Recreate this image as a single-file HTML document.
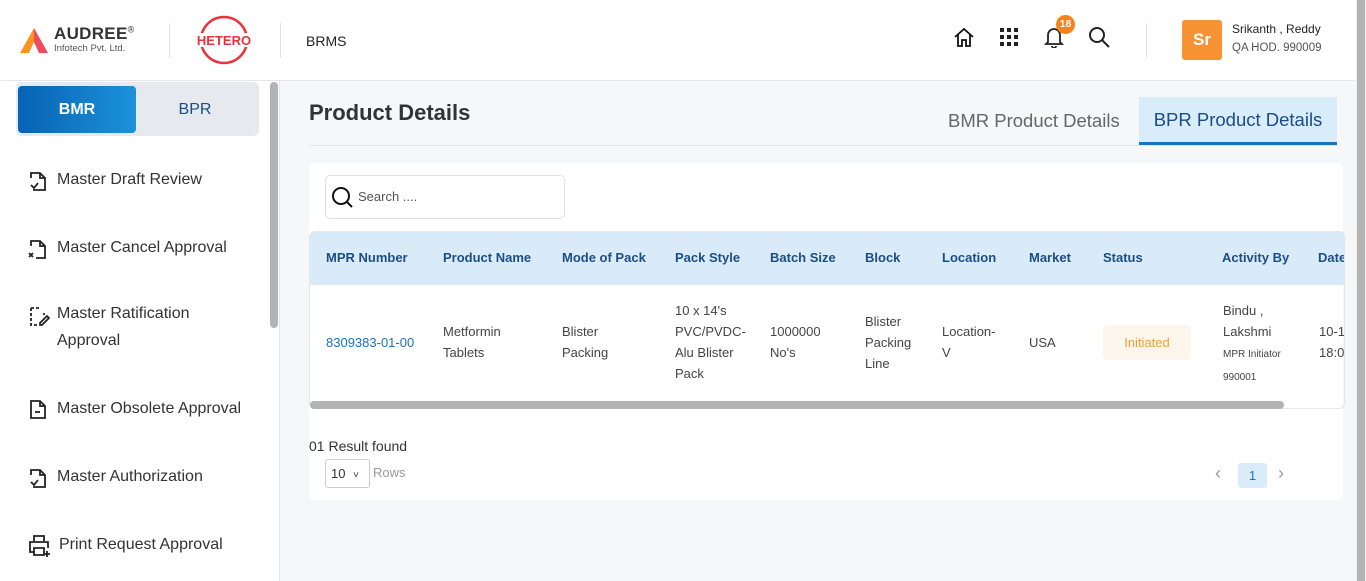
<!DOCTYPE html>
<html><head><meta charset="utf-8"><style>
*{box-sizing:border-box;margin:0;padding:0}
body{width:1366px;height:581px;overflow:hidden;font-family:"Liberation Sans",sans-serif;background:#f6f7f9;position:relative;color:#333}
.abs{position:absolute}
.hdr{left:0;top:0;width:1356px;height:81px;background:#fff;border-bottom:1px solid #e3e6ea}
.side{left:0;top:81px;width:280px;height:500px;background:#fff;border-right:1px solid #e3e6ea}
.mi{position:absolute;left:57px;font-size:16px;color:#333;line-height:27px}
.ic{position:absolute;left:28px}
.th{position:absolute;top:250px;font-size:13px;font-weight:bold;color:#1c4e86}
.td{position:absolute;font-size:13px;color:#444;line-height:21px}
</style></head><body>
<div class="abs hdr"></div>
<svg class="abs" style="left:20px;top:28px" width="28" height="25" viewBox="0 0 28 25"><polygon points="14,0 0,25 9,25 14,14" fill="#f7931e"/><polygon points="14,0 28,25 19,25 14,14" fill="#ef4b5a"/><circle cx="14" cy="21" r="2" fill="#fff"/></svg>
<div class="abs" style="left:54px;top:24px;font-size:17px;font-weight:bold;color:#333;letter-spacing:.3px">AUDREE<sup style="font-size:9px;font-weight:normal">®</sup></div>
<div class="abs" style="left:54px;top:43px;font-size:9.5px;color:#555">Infotech Pvt. Ltd.</div>
<div class="abs" style="left:169px;top:23px;width:1px;height:35px;background:#e3e3e3"></div>
<svg class="abs" style="left:194px;top:14px" width="62" height="52" viewBox="0 0 62 52"><circle cx="30" cy="26" r="23" fill="none" stroke="#e8323c" stroke-width="2.5"/><rect x="0" y="19" width="62" height="14" fill="#fff"/><text x="30" y="31" text-anchor="middle" font-family="Liberation Sans" font-weight="bold" font-size="13" fill="#e8323c">HETERO</text></svg>
<div class="abs" style="left:280px;top:23px;width:1px;height:35px;background:#e3e3e3"></div>
<div class="abs" style="left:306px;top:33px;font-size:14px;color:#222">BRMS</div>
<svg class="abs" style="left:953px;top:27px" width="22" height="20" viewBox="0 0 22 20" fill="none" stroke="#111" stroke-width="1.8"><path d="M2 10 L11 2 L20 10"/><path d="M5 8 V19 H9 V13 H13 V19 H17 V8"/></svg>
<svg class="abs" style="left:1000px;top:28px" width="18" height="18" viewBox="0 0 18 18" fill="#222"><rect x="0" y="0" width="4" height="4"/><rect x="7" y="0" width="4" height="4"/><rect x="14" y="0" width="4" height="4"/><rect x="0" y="7" width="4" height="4"/><rect x="7" y="7" width="4" height="4"/><rect x="14" y="7" width="4" height="4"/><rect x="0" y="14" width="4" height="4"/><rect x="7" y="14" width="4" height="4"/><rect x="14" y="14" width="4" height="4"/></svg>
<svg class="abs" style="left:1044px;top:26px" width="20" height="22" viewBox="0 0 20 22" fill="none" stroke="#222" stroke-width="1.8"><path d="M4 16 V9 a6 6 0 0 1 12 0 V16 L18 18 H2 Z"/><path d="M8 20 a2 2 0 0 0 4 0"/></svg>
<div class="abs" style="left:1056px;top:15px;width:19px;height:19px;border-radius:50%;background:#f7821b;color:#fff;font-size:10.5px;font-weight:bold;text-align:center;line-height:19px">18</div>
<svg class="abs" style="left:1088px;top:26px" width="24" height="24" viewBox="0 0 24 24" fill="none" stroke="#222" stroke-width="2"><circle cx="9" cy="9" r="7"/><path d="M14 14 L21 21"/></svg>
<div class="abs" style="left:1146px;top:23px;width:1px;height:35px;background:#e3e3e3"></div>
<div class="abs" style="left:1182px;top:20px;width:40px;height:40px;border-radius:3px;background:#f79332;color:#fff;font-size:17px;font-weight:bold;text-align:center;line-height:40px">Sr</div>
<div class="abs" style="left:1232px;top:22px;font-size:12px;color:#222">Srikanth , Reddy</div>
<div class="abs" style="left:1232px;top:42px;font-size:11.5px;color:#555">QA HOD. 990009</div>
<div class="abs" style="left:1356px;top:0;width:10px;height:581px;background:#f1f1f1"></div>
<div class="abs" style="left:1357px;top:0;width:8px;height:581px;background:#b3b3b3"></div>
<div class="abs side"></div>
<div class="abs" style="left:270px;top:82px;width:8px;height:246px;border-radius:4px;background:#b3b3b3"></div>
<div class="abs" style="left:16px;top:82px;width:243px;height:54px;border-radius:6px;background:#e6e9ee"></div>
<div class="abs" style="left:18px;top:86px;width:118px;height:47px;border-radius:4px;background:linear-gradient(90deg,#0762b4,#1c92db);color:#fff;font-size:16px;font-weight:bold;text-align:center;line-height:47px">BMR</div>
<div class="abs" style="left:136px;top:86px;width:118px;height:47px;color:#1a4d88;font-size:16px;text-align:center;line-height:47px">BPR</div>
<svg class="ic" style="top:170px" width="20" height="22" viewBox="0 0 20 22" fill="none" stroke="#222" stroke-width="1.8"><path d="M3 8 V3 H12 L17 8 V20 H5"/><path d="M12 3 V8 H17"/><path d="M3 15 L6 18 L10 13"/></svg>
<div class="mi" style="top:166px">Master Draft Review</div>
<svg class="ic" style="top:238px" width="20" height="22" viewBox="0 0 20 22" fill="none" stroke="#222" stroke-width="1.8"><path d="M3 8 V3 H12 L17 8 V20 H8"/><path d="M12 3 V8 H17"/><path d="M1 15 L5 19 M5 15 L1 19"/></svg>
<div class="mi" style="top:234px">Master Cancel Approval</div>
<svg class="ic" style="top:305px" width="22" height="22" viewBox="0 0 22 22" fill="none" stroke="#222" stroke-width="1.8" stroke-dasharray="3 2"><path d="M3 3 H11 M16 8 V10 M3 3 V20 H11"/><path d="M12 18 L19 11 L21 13 L14 20 H12 Z" stroke-dasharray="none"/></svg>
<div class="mi" style="top:300px">Master Ratification<br>Approval</div>
<svg class="ic" style="top:398px" width="20" height="22" viewBox="0 0 20 22" fill="none" stroke="#222" stroke-width="1.8"><path d="M3 3 H12 L17 8 V20 H3 Z"/><path d="M12 3 V8 H17"/><path d="M7 14 H12"/></svg>
<div class="mi" style="top:395px">Master Obsolete Approval</div>
<svg class="ic" style="top:467px" width="20" height="22" viewBox="0 0 20 22" fill="none" stroke="#222" stroke-width="1.8"><path d="M3 8 V3 H12 L17 8 V20 H5"/><path d="M12 3 V8 H17"/><path d="M3 15 L6 18 L10 13"/></svg>
<div class="mi" style="top:463px">Master Authorization</div>
<svg class="ic" style="top:534px" width="24" height="24" viewBox="0 0 24 24" fill="none" stroke="#222" stroke-width="1.8"><path d="M6 7 V2 H16 V7"/><path d="M6 18 H2 V8 H20 V14"/><path d="M6 14 H16 V21 H6 Z"/><path d="M19 17 V23 M16 20 H22"/></svg>
<div class="mi" style="top:531px;left:59px">Print Request Approval</div>
<div class="abs" style="left:309px;top:100px;font-size:22px;font-weight:bold;color:#333">Product Details</div>
<div class="abs" style="left:309px;top:145px;width:1028px;height:1px;background:#e2e4e8"></div>
<div class="abs" style="left:948px;top:110px;font-size:18.5px;color:#666">BMR Product Details</div>
<div class="abs" style="left:1139px;top:97px;width:198px;height:48px;background:#d9ecf9;border-bottom:3px solid #1a73c0;color:#1a4d88;font-size:18.5px;text-align:center;line-height:46px">BPR Product Details</div>
<div class="abs" style="left:309px;top:163px;width:1034px;height:337px;background:#fff;border-radius:6px"></div>
<div class="abs" style="left:325px;top:175px;width:240px;height:44px;border:1px solid #e0e0e0;border-radius:5px"></div>
<svg class="abs" style="left:331px;top:186px" width="24" height="24" viewBox="0 0 24 24" fill="none" stroke="#111" stroke-width="2"><circle cx="10" cy="10" r="8"/><path d="M16 16 L21 21"/></svg>
<div class="abs" style="left:358px;top:189px;font-size:13px;color:#555">Search ....</div>
<div class="abs" style="left:309px;top:231px;width:1036px;height:178px;border:1px solid #e3e6ea;border-radius:6px;overflow:hidden">
<div style="height:53px;background:#d9ebf8"></div>
</div>
<div class="th" style="left:326px">MPR Number</div>
<div class="th" style="left:443px">Product Name</div>
<div class="th" style="left:562px">Mode of Pack</div>
<div class="th" style="left:675px">Pack Style</div>
<div class="th" style="left:770px">Batch Size</div>
<div class="th" style="left:865px">Block</div>
<div class="th" style="left:942px">Location</div>
<div class="th" style="left:1029px">Market</div>
<div class="th" style="left:1103px">Status</div>
<div class="th" style="left:1222px">Activity By</div>
<div class="th" style="left:1318px;width:26px;overflow:hidden">Date</div>
<div class="td" style="left:326px;top:332px;color:#1a73c0">8309383-01-00</div>
<div class="td" style="left:443px;top:321px">Metformin<br>Tablets</div>
<div class="td" style="left:562px;top:321px">Blister<br>Packing</div>
<div class="td" style="left:675px;top:300px">10 x 14's<br>PVC/PVDC-<br>Alu Blister<br>Pack</div>
<div class="td" style="left:770px;top:321px">1000000<br>No's</div>
<div class="td" style="left:865px;top:311px">Blister<br>Packing<br>Line</div>
<div class="td" style="left:942px;top:321px">Location-<br>V</div>
<div class="td" style="left:1029px;top:332px">USA</div>
<div class="abs" style="left:1103px;top:325px;width:88px;height:35px;background:#fdf6ec;border-radius:4px;color:#e6a23c;font-size:13px;text-align:center;line-height:35px">Initiated</div>
<div class="td" style="left:1223px;top:300px">Bindu ,<br>Lakshmi<br><span style="font-size:10px">MPR Initiator<br>990001</span></div>
<div class="td" style="left:1319px;top:321px;width:25px;overflow:hidden;white-space:nowrap">10-1<br>18:0</div>
<div class="abs" style="left:310px;top:401px;width:974px;height:8px;border-radius:4px;background:#b3b3b3"></div>
<div class="abs" style="left:309px;top:438px;font-size:14px;color:#333">01 Result found</div>
<div class="abs" style="left:325px;top:459px;width:45px;height:29px;border:1px solid #ccc;border-radius:3px;font-size:13px;padding:6px 0 0 5px">10 <span style="font-size:10px;margin-left:4px">&#x2C5;</span></div>
<div class="abs" style="left:373px;top:465px;font-size:13px;color:#999">Rows</div>
<div class="abs" style="left:1215px;top:463px;font-size:18px;color:#999">&#x2039;</div>
<div class="abs" style="left:1238px;top:463px;width:29px;height:25px;background:#d9ecf9;border-radius:3px;color:#1a73c0;font-size:13px;text-align:center;line-height:25px">1</div>
<div class="abs" style="left:1278px;top:463px;font-size:18px;color:#999">&#x203A;</div>
</body></html>
